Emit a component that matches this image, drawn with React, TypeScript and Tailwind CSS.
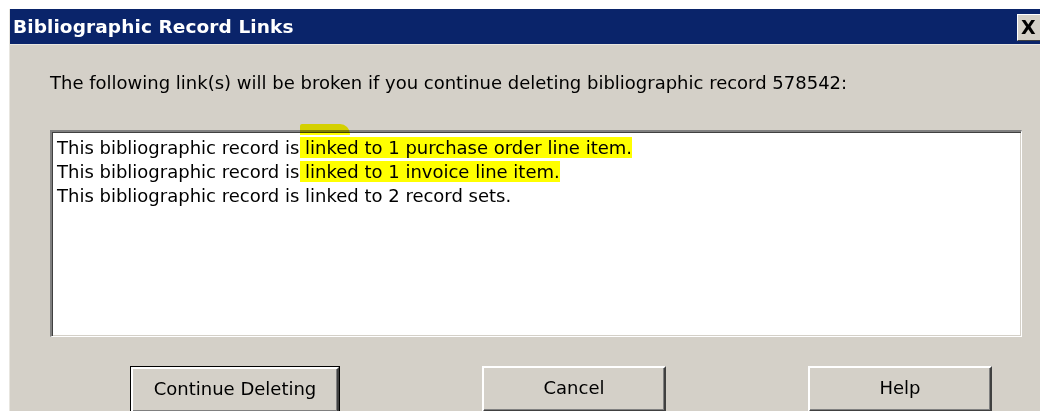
import React from "react";

const ui = "font-['DejaVu_Sans',Verdana,sans-serif]";

function Button({ label, isDefault = false }: { label: string; isDefault?: boolean }) {
  // classic 3D push button; the default one gets an extra black frame
  const face =
    "h-[46px] bg-[#d4d0c8] border-t-2 border-l-2 border-r-2 border-b-2 border-t-white border-l-white border-r-[#404040] border-b-[#404040] shadow-[inset_-1px_-1px_0_#808080] flex items-center justify-center pb-[3px] text-[18px] text-black";
  if (isDefault) {
    return (
      <div className="w-[210px] border border-black shrink-0">
        <div className={face}>{label}</div>
      </div>
    );
  }
  return <div className={`w-[184px] shrink-0 ${face}`}>{label}</div>;
}

function Mark({ children }: { children: React.ReactNode }) {
  return <span className="bg-[#ffff00] shadow-[-5px_0_0_#ffff00]">{children}</span>;
}

export default function App() {
  return (
    <div className={`w-[1040px] h-[411px] overflow-hidden bg-white pt-[9px] pl-[9px] ${ui}`}>
      <div className="w-[1031px] h-[420px] bg-[#d4d0c8] border-l border-[#e8e6e0] flex flex-col">
        {/* title bar */}
        <div className="h-[35px] bg-[#0a246a] flex items-center pl-[3px] shrink-0">
          <span className="text-white font-bold text-[18.5px] tracking-[0.1px]">Bibliographic Record Links</span>
          <div className="ml-auto -mr-[7px] mt-[1px] w-[30px] h-[27px] bg-[#d4d0c8] border-t border-l border-white border-r border-b border-r-[#404040] border-b-[#404040] flex items-center pl-[3px] text-black font-bold text-[19px] leading-none">
            X
          </div>
        </div>
        <div className="h-px bg-[#e8e6e0]" />

        <div className="pl-[40px] pt-[26px] text-black">
          <p className="text-[18px] leading-[24px]">
            The following link(s) will be broken if you continue deleting bibliographic record 578542:
          </p>

          {/* list of links */}
          <div className="relative mt-[35px] w-[972px] h-[207px] bg-white border-t-2 border-l-2 border-t-[#808080] border-l-[#808080] border-r border-b border-r-white border-b-white shadow-[inset_1px_1px_0_#404040,inset_-1px_-1px_0_#d4d0c8] pt-[4px] pl-[5px] text-[18px] leading-[24px]">
            <div className="absolute -top-[8px] left-[248px] w-[50px] h-[11px] bg-[#ffff00] mix-blend-multiply rounded-tl-[2px] rounded-tr-[10px]" />
            <div>
              This bibliographic record is <Mark>linked to 1 purchase order line item.</Mark>
            </div>
            <div>
              This bibliographic record is <Mark>linked to 1 invoice line item.</Mark>
            </div>
            <div>This bibliographic record is linked to 2 record sets.</div>
          </div>
        </div>

        <div className="flex pl-[120px] gap-[142px] mt-[29px]">
          <Button label="Continue Deleting" isDefault />
          <Button label="Cancel" />
          <Button label="Help" />
        </div>
      </div>
    </div>
  );
}
